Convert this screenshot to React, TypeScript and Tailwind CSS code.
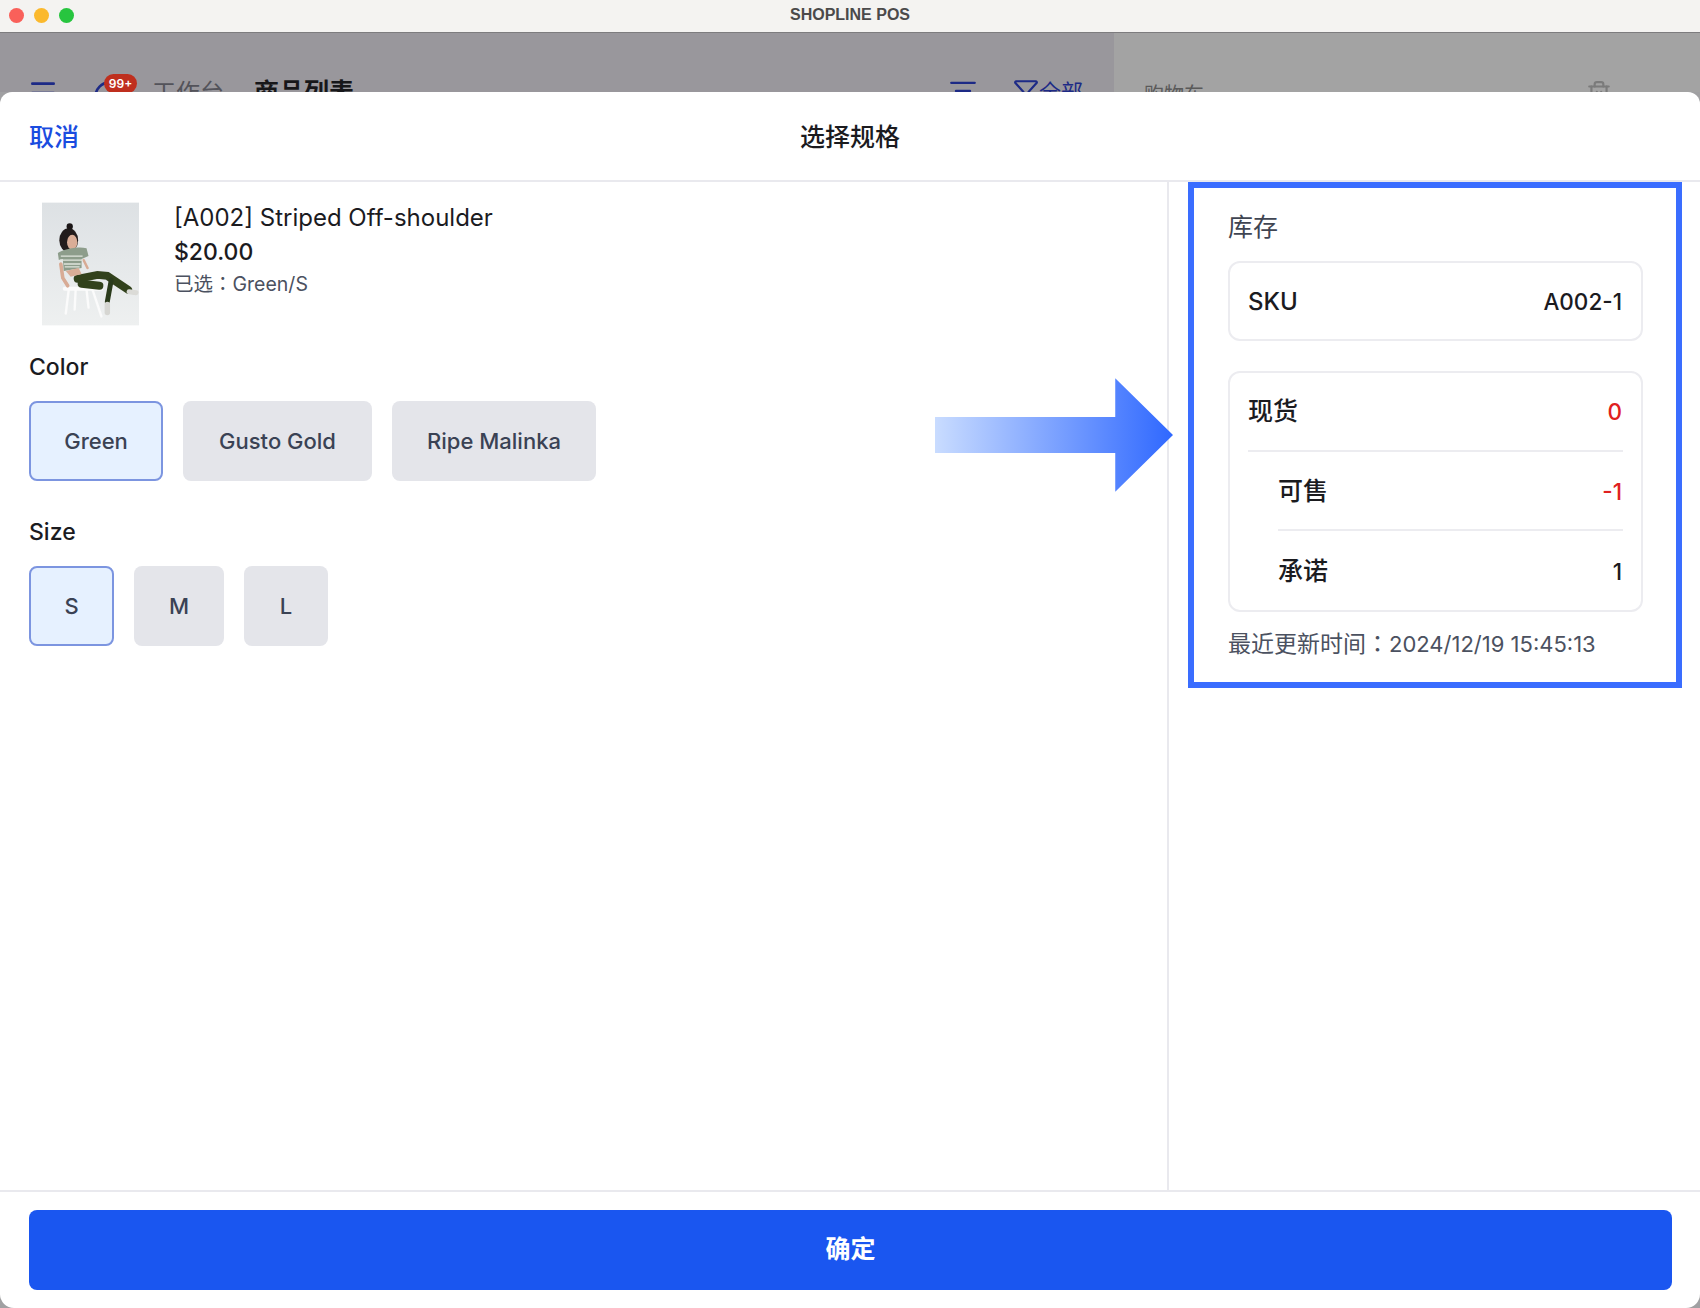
import { Menu, Filter, ListFilter, Trash2, Circle } from 'lucide-react';

const FONT = "font-['Inter','Noto_Sans_CJK_SC',sans-serif]";

const colors = ['Green', 'Gusto Gold', 'Ripe Malinka'];
const sizes = ['S', 'M', 'L'];

function OptionButton({ label, active, width }: { label: string; active?: boolean; width: string }) {
  return (
    <button
      className={`${width} h-[80px] rounded-[8px] text-[22px] font-medium text-[#3a4254] ${
        active ? 'bg-[#e6f1ff] border-2 border-[#7c95e0]' : 'bg-[#e4e5ea]'
      }`}
    >
      {label}
    </button>
  );
}

function ProductPhoto() {
  return (
    <svg viewBox="0 0 98 124" className="w-[97px] h-[124px] shrink-0 ml-[13px]">
      <defs>
        <linearGradient id="wall" x1="0" y1="0" x2="0" y2="1">
          <stop offset="0" stopColor="#dde1e4" />
          <stop offset="1" stopColor="#eef0f0" />
        </linearGradient>
        <filter id="soft">
          <feGaussianBlur stdDeviation="0.5" />
        </filter>
      </defs>
      <rect width="98" height="124" fill="url(#wall)" />
      <g filter="url(#soft)" fill="none" strokeLinecap="round">
        <path d="M27 88 24 112M51 88 60 115M34 88 33 108M45 88 47 106" stroke="#fbfbfb" strokeWidth="2.4" />
        <path d="M23 87H60" stroke="#fbfbfb" strokeWidth="4" />
        <path d="M19 62 21 76 26 84" stroke="#d8ab95" strokeWidth="3.6" />
        <path d="M42 58 46 66" stroke="#d8ab95" strokeWidth="2.6" />
        <path d="M36 77 56 73 66 74 87 88" stroke="#33431f" strokeWidth="8" />
        <path d="M40 82 58 84" stroke="#33431f" strokeWidth="8" />
        <path d="M70 78 66 100" stroke="#2c3a1b" strokeWidth="5" />
        <path d="M88 90 95 91" stroke="#dbdbd7" strokeWidth="5" />
        <path d="M66 103 66 111" stroke="#d6d6d2" strokeWidth="5.5" />
      </g>
      <g filter="url(#soft)">
        <ellipse cx="27" cy="38" rx="9.5" ry="12" fill="#211d1c" />
        <circle cx="28" cy="24" r="3.2" fill="#1b1818" />
        <ellipse cx="30.5" cy="40" rx="5.2" ry="7.5" fill="#d9ad97" />
        <path d="M16 51c5-4 20-7 29-5l2 8-7 3 0 9-18 3-1-12-4 1z" fill="#8d9d8b" />
        <path d="M19 54h22M18 58h23M22 62h17M23 65h15" stroke="#dfe5dd" strokeWidth="1.3" />
        <path d="M24 69 37 66 40 72 29 75z" fill="#d9ad97" />
      </g>
    </svg>
  );
}

function StockRow({ label, value, red, height }: { label: string; value: string; red?: boolean; height: string }) {
  return (
    <div className={`${height} flex items-center`}>
      <span className="text-[25px] font-medium text-[#1b1b1f]">{label}</span>
      <span className={`ml-auto pr-[1px] text-[22.5px] font-medium ${red ? 'text-[#df2020]' : 'text-[#1b1b1f]'}`}>{value}</span>
    </div>
  );
}

export default function App() {
  return (
    <div className={`${FONT} relative w-[1700px] h-[1308px] overflow-hidden flex flex-col bg-[#a0a0a2]`}>
      <div className="h-[32px] shrink-0 bg-[#f4f3f1] border-b border-[#7d7c7e] box-content flex items-center relative">
        <div className="flex items-center gap-[10px] pl-[9px] mt-[-2px]">
          <span className="w-[15px] h-[15px] rounded-full bg-[#f9605a]" />
          <span className="w-[15px] h-[15px] rounded-full bg-[#fbb92d]" />
          <span className="w-[15px] h-[15px] rounded-full bg-[#27c53f]" />
        </div>
        <span className="absolute left-0 right-0 top-[5px] text-center text-[16px] leading-[20px] font-semibold text-[#4b4a4a] font-['Liberation_Sans',sans-serif]">
          SHOPLINE POS
        </span>
      </div>

      <div className="h-[59px] shrink-0 flex overflow-hidden">
        <div className="w-[1114px] bg-[#99979c] flex items-start pt-[44px] pl-[27px] text-[25px]">
          <Menu className="w-[32px] h-[32px] text-[#1d2a86]" />
          <div className="relative ml-[34px] mt-[3px]">
            <Circle className="w-[32px] h-[32px] text-[#1d2a86]" />
            <span className="absolute left-[11px] top-[-6px] w-[33px] h-[19px] rounded-full bg-[#bf2f1e] text-white text-[12px] font-semibold leading-[19px] text-center">
              99+
            </span>
          </div>
          <span className="ml-[27px] mt-[-2px] text-[24px] text-[#53535a]">工作台</span>
          <span className="ml-[30px] mt-[-3px] font-semibold text-[#17171a]">商品列表</span>
          <ListFilter className="ml-auto w-[28px] h-[28px] text-[#1d2a86]" />
          <Filter className="ml-[36px] w-[26px] h-[28px] text-[#1d2a86]" />
          <span className="mr-[31px] mt-[-1px] text-[22px] text-[#1d2a86]">全部</span>
        </div>
        <div className="flex-1 bg-[#a3a3a3] flex items-start pt-[44px] pl-[30px] text-[20px] text-[#5a5a5a]">
          <span className="mt-[3px]">购物车</span>
          <Trash2 className="ml-auto mr-[88px] mt-[3px] w-[26px] h-[26px] text-[#7b7b7b]" />
        </div>
      </div>

      <div className="flex-1 min-h-0 flex flex-col bg-white rounded-t-[12px] rounded-b-[14px]">
        <div className="h-[90px] shrink-0 relative flex items-center justify-center border-b-2 border-[#e9e9ee] pt-[4px]">
          <span className="absolute left-[29px] text-[25px] font-medium text-[#1a4ce0]">取消</span>
          <span className="text-[25px] font-medium text-[#1b1b1f]">选择规格</span>
        </div>

        <div className="flex-1 min-h-0 flex">
          <div className="w-[1169px] shrink-0 border-r-2 border-[#e9e9ee] px-[29px] pt-[20px]">
            <div className="flex gap-[35px]">
              <ProductPhoto />
              <div className="flex flex-col">
                <span className="text-[24px] leading-[32px] text-[#1b1b1f]">[A002] Striped Off-shoulder</span>
                <span className="text-[23px] leading-[36px] font-medium text-[#1b1b1f]">$20.00</span>
                <span className="text-[19.5px] leading-[26px] text-[#4b5160]">
                  已选<span className="font-['Noto_Sans_CJK_TC']">：</span>Green/S
                </span>
              </div>
            </div>

            <div className="mt-[25px] text-[23px] leading-[32px] font-medium text-[#1b1b1f]">Color</div>
            <div className="mt-[18px] flex gap-[20px]">
              <OptionButton label={colors[0]} active width="w-[134px]" />
              <OptionButton label={colors[1]} width="w-[189px]" />
              <OptionButton label={colors[2]} width="w-[204px]" />
            </div>

            <div className="mt-[35px] text-[23px] leading-[32px] font-medium text-[#1b1b1f]">Size</div>
            <div className="mt-[18px] flex gap-[20px]">
              <OptionButton label={sizes[0]} active width="w-[85px]" />
              <OptionButton label={sizes[1]} width="w-[90px]" />
              <OptionButton label={sizes[2]} width="w-[84px]" />
            </div>
          </div>

          <div className="flex-1 pl-[19px] pr-[18px]">
            <div className="h-[506px] border-[6px] border-[#3a6dff] pl-[34px] pr-[33px] pt-[21px]">
              <div className="text-[25px] leading-[36px] text-[#3f4552]">库存</div>
              <div className="mt-[16px] h-[80px] rounded-[12px] border-2 border-[#ececf0] pl-[18px] pr-[18px] pt-[2px] flex items-center">
                <span className="text-[24px] font-medium text-[#1b1b1f]">SKU</span>
                <span className="ml-auto pr-[1px] text-[22.5px] font-medium text-[#1b1b1f]">A002-1</span>
              </div>
              <div className="mt-[30px] rounded-[12px] border-2 border-[#ececf0] px-[18px]">
                <div className="border-b-2 border-[#ececf0] pt-[1px]">
                  <StockRow label="现货" value="0" red height="h-[76px]" />
                </div>
                <div className="ml-[30px] border-b-2 border-[#ececf0] pt-[2px]">
                  <StockRow label="可售" value="-1" red height="h-[75px]" />
                </div>
                <div className="ml-[30px] pt-[3px]">
                  <StockRow label="承诺" value="1" height="h-[76px]" />
                </div>
              </div>
              <div className="mt-[12px] text-[23px] leading-[36px] text-[#4b5160]">
                最近更新时间<span className="font-['Noto_Sans_CJK_TC']">：</span>
                <span className="text-[22px]">2024/12/19 15:45:13</span>
              </div>
            </div>
          </div>
        </div>

        <div className="h-[118px] shrink-0 border-t-2 border-[#e9e9ee] px-[29px] pt-[18px]">
          <button className="w-[1643px] h-[80px] rounded-[8px] bg-[#1a56f0] text-white text-[25px] font-semibold">确定</button>
        </div>
      </div>

      <svg viewBox="0 0 240 116" className="absolute left-[935px] top-[377px] w-[239px] h-[116px]">
        <defs>
          <linearGradient id="arrowFill" x1="0" y1="0" x2="1" y2="0">
            <stop offset="0" stopColor="#c9dcff" />
            <stop offset="1" stopColor="#2f68ff" />
          </linearGradient>
        </defs>
        <path d="M0 40H181V1L239 58 181 115V76H0Z" fill="url(#arrowFill)" />
      </svg>
    </div>
  );
}
